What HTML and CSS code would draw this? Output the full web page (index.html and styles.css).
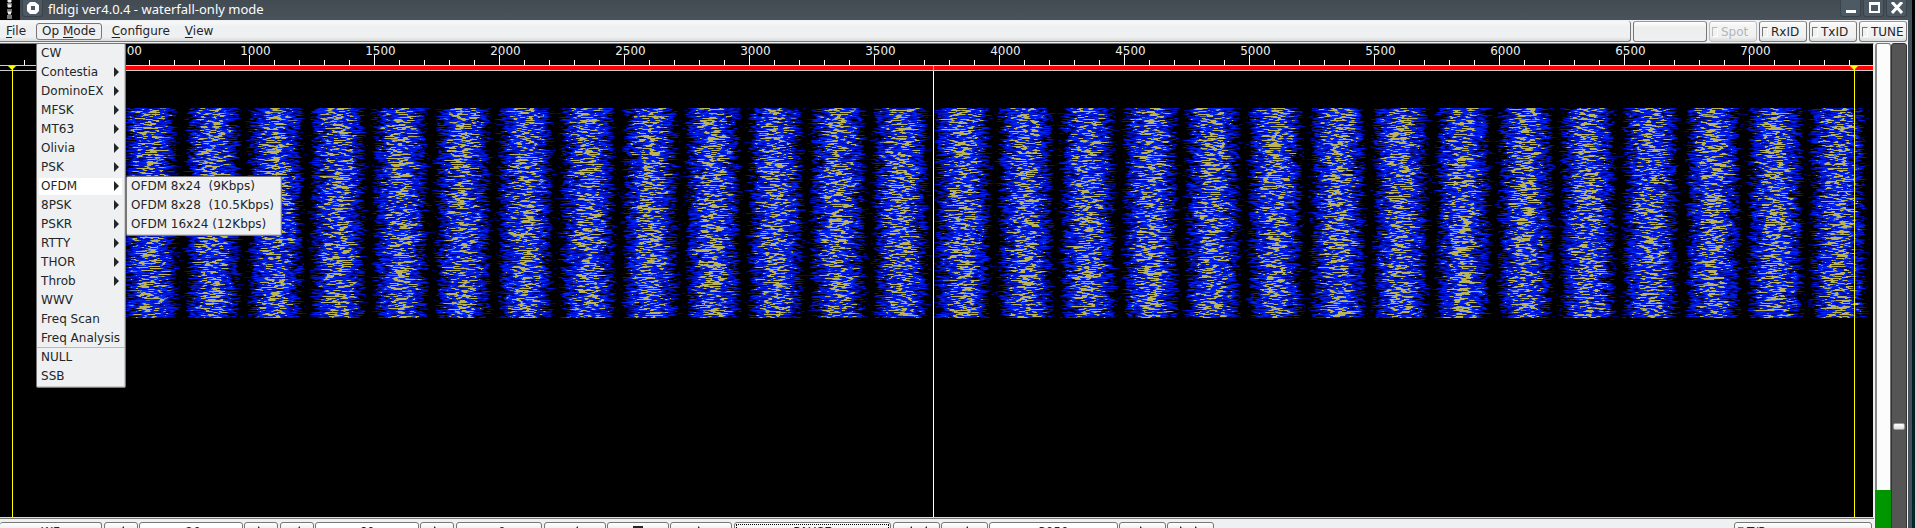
FILE: index.html
```html
<!DOCTYPE html>
<html lang="en">
<head>
<meta charset="utf-8">
<title>fldigi ver4.0.4 - waterfall-only mode</title>
<link rel="stylesheet" href="styles.css">
</head>
<body>
<div class="window">
  <header class="titlebar">
    <svg class="desktop-corner" viewBox="0 0 20 20" aria-hidden="true">
      <rect width="20" height="20" fill="#000"/>
      <path d="M7 0h5M7 5h5M7 11h5M7 17h5" stroke="#777" stroke-width="4"/>
      <path d="M8 1h3M8 6h3M8 13h3" stroke="#eee" stroke-width="3"/>
    </svg>
    <button class="title-btn" aria-label="Window menu">
      <svg width="12" height="12" viewBox="0 0 12 12"><path fill="#fff" fill-rule="evenodd" d="M3 0H8L12 3V9L9 12H3L0 9V3ZM4 4V8H8V4Z"/></svg>
    </button>
    <h1 class="title">fldigi ver4.0.4 - waterfall-only mode</h1>
    <div class="title-controls">
      <button class="title-btn" aria-label="Minimize"><svg width="12" height="12" viewBox="0 0 12 12"><path fill="#fff" d="M1 8h10v3H1z"/></svg></button>
      <button class="title-btn" aria-label="Maximize"><svg width="12" height="12" viewBox="0 0 12 12"><path fill="#fff" fill-rule="evenodd" d="M1 0h11v11H1zM3 3v6h7V3z"/></svg></button>
      <button class="title-btn" aria-label="Close"><svg width="12" height="12" viewBox="0 0 12 12"><path stroke="#fff" stroke-width="3" d="M1 0l10 11M11 0L1 11"/></svg></button>
    </div>
  </header>

  <div class="toolbar">
    <nav class="menubar">
      <button class="menu-title"><u>F</u>ile</button>
      <div class="menu-holder">
        <button class="menu-title open">Op <u>M</u>ode</button>
        <div class="menu main-menu">
          <button class="item">CW</button>
          <button class="item sub">Contestia</button>
          <button class="item sub">DominoEX</button>
          <button class="item sub">MFSK</button>
          <button class="item sub">MT63</button>
          <button class="item sub">Olivia</button>
          <button class="item sub">PSK</button>
          <div class="menu-holder">
            <button class="item sub active">OFDM</button>
            <div class="menu submenu">
              <button class="item">OFDM 8x24  (9Kbps)</button>
              <button class="item">OFDM 8x28  (10.5Kbps)</button>
              <button class="item">OFDM 16x24 (12Kbps)</button>
            </div>
          </div>
          <button class="item sub">8PSK</button>
          <button class="item sub">PSKR</button>
          <button class="item sub">RTTY</button>
          <button class="item sub">THOR</button>
          <button class="item sub">Throb</button>
          <button class="item">WWV</button>
          <button class="item">Freq Scan</button>
          <button class="item last">Freq Analysis</button>
          <button class="item">NULL</button>
          <button class="item">SSB</button>
        </div>
      </div>
      <button class="menu-title"><u>C</u>onfigure</button>
      <button class="menu-title"><u>V</u>iew</button>
    </nav>
    <div class="status"></div>
    <label class="toggle disabled"><input type="checkbox" disabled>Spot</label>
    <label class="toggle"><input type="checkbox">RxID</label>
    <label class="toggle"><input type="checkbox">TxID</label>
    <label class="toggle"><input type="checkbox">TUNE</label>
  </div>

  <main class="content">
    <section class="left">
      <div class="scope">
        <div class="scale">
          <span>500</span><span>1000</span><span>1500</span><span>2000</span><span>2500</span><span>3000</span><span>3500</span><span>4000</span><span>4500</span><span>5000</span><span>5500</span><span>6000</span><span>6500</span><span>7000</span>
        </div>
        <div class="band"></div>
        <div class="waterfall"><canvas class="signal"></canvas></div>
        <i class="marker low"></i>
        <i class="marker carrier"></i>
        <i class="marker high"></i>
      </div>
      <div class="controls">
        <button class="ctl wf">WF</button>
        <div class="group">
          <button class="ctl step" aria-label="Lower reference"><i class="arrow back"></i></button>
          <input class="ctl value" value="-20" aria-label="Reference level">
          <button class="ctl step" aria-label="Raise reference"><i class="arrow"></i></button>
        </div>
        <div class="group">
          <button class="ctl step" aria-label="Lower range"><i class="arrow back"></i></button>
          <input class="ctl value" value="60" aria-label="Signal range">
          <button class="ctl step" aria-label="Raise range"><i class="arrow"></i></button>
        </div>
        <button class="ctl zoom">x1</button>
        <div class="group">
          <button class="ctl move" aria-label="Scroll left"><i class="arrow back"></i></button>
          <button class="ctl move" aria-label="Centre"><i class="stop"></i></button>
          <button class="ctl move" aria-label="Scroll right"><i class="arrow"></i></button>
        </div>
        <button class="ctl pause">PAUSE</button>
        <div class="group">
          <button class="ctl seek" aria-label="Fast down"><i class="arrow back"></i><i class="arrow back"></i></button>
          <button class="ctl seek" aria-label="Down"><i class="arrow back"></i></button>
          <input class="ctl freq" value="3050" aria-label="Frequency">
          <button class="ctl seek" aria-label="Up"><i class="arrow"></i></button>
          <button class="ctl seek" aria-label="Fast up"><i class="arrow"></i><i class="arrow"></i></button>
        </div>
        <label class="ctl tr"><input type="checkbox">T/R</label>
      </div>
    </section>
    <div class="meter"><div class="meter-fill"></div></div>
    <div class="slider"><input class="squelch" type="range" min="0" max="100" value="23" aria-label="Squelch"></div>
  </main>
</div>
<script src="waterfall.js"></script>
</body>
</html>
```
FILE: styles.css
```css
* { box-sizing: border-box; }

body {
  margin: 0;
  padding-right: 3px;
  height: 100vh;
  overflow: hidden;
  background: linear-gradient(#000, #010c0e 30%, #00282b);
  font: 12px/18px "DejaVu Sans", sans-serif;
  color: #232629;
}

button, input { font: inherit; color: inherit; margin: 0; padding: 0; }
button { background: none; border: 0; text-align: left; }
u { text-underline-offset: 2px; }

.window {
  display: flex;
  flex-direction: column;
  height: calc(100vh + 16px);
  border-right: 4px solid #44505a;
  background: #eff0f1;
}

.titlebar {
  display: flex;
  align-items: flex-start;
  height: 20px;
  margin-right: -4px;
  padding-right: 5px;
  background: linear-gradient(#424a52, #4a535b);
}
.desktop-corner { width: 20px; height: 20px; margin-right: 2px; }
.title {
  flex: 1;
  margin: 0 0 0 5px;
  font: 13px/18px "Noto Sans", sans-serif;
  color: #fcfcfc;
}
.title-controls { display: flex; gap: 2px; }
.title-btn {
  display: flex;
  justify-content: center;
  width: 21px;
  height: 17px;
  padding-top: 2px;
  border: 1px solid #39434b;
  border-top: 0;
  border-radius: 0 0 3px 3px;
  background: #4d5963;
}

.toolbar { display: flex; gap: 2px; height: 22px; padding: 1px 1px 0 0; }
.menubar {
  display: flex;
  flex: 1;
  align-items: center;
  border-right: 1px solid #777;
  border-bottom: 1px solid #777;
  border-radius: 0 3px 3px 0;
  background: linear-gradient(#f8f8f8, #eff0f1 30%, #eff0f1 80%, #d8dad8);
}
.menu-title {
  display: block;
  height: 17px;
  padding: 0 5px;
  border: 1px solid transparent;
  border-radius: 3px;
  line-height: 15px;
}
.menu-title.open { border-color: #777; background: #eff0f1; }
.menu-holder { position: relative; }
.menubar > .menu-holder { margin: 0 4px; }
.menubar > .menu-title:last-child { margin-left: 3px; }

.menu {
  position: absolute;
  z-index: 5;
  border: 1px solid #777;
  border-radius: 2px;
  background: #eff0f1;
  box-shadow: inset -1px -1px #ccc;
}
.main-menu { top: 20px; left: 0; width: 90px; padding-bottom: 1px; }
.submenu { top: -1px; left: 89px; padding-bottom: 1px; }
.item {
  display: block;
  width: 100%;
  height: 19px;
  padding: 0 4px;
  line-height: 19px;
  white-space: pre;
}
.submenu .item { padding: 0 7px 0 4px; }
.item.sub { display: flex; justify-content: space-between; align-items: center; padding-right: 6px; }
.item.sub::after {
  content: "";
  border: 5px solid transparent;
  border-left-color: #232629;
  border-right: 0;
}
.item.active { background: linear-gradient(#fff, #fff) 2px 1px / calc(100% - 5px) 17px no-repeat; }
.item.last { border-bottom: 1px solid #bbb; }

.status {
  width: 74px;
  border: 1px solid #777;
  border-top-color: #999;
  border-radius: 3px;
  background: linear-gradient(#fff, #eee 30%, #eff0f1);
}
.toggle {
  display: flex;
  align-items: center;
  gap: 3px;
  width: 48px;
  padding-left: 2px;
  border: 1px solid #777;
  border-top-color: #999;
  border-radius: 3px;
  background: linear-gradient(#fff, #f4f4f4 20%, #eff0f1 80%, #d8dad8);
}
.toggle.disabled { color: #b4b5b6; border-color: #bbb; }
.toggle input, .tr input {
  appearance: none;
  flex: none;
  width: 6px;
  height: 10px;
  border: 1px solid #fff;
  border-top-color: #777;
  border-left-color: #777;
}
.toggle.disabled input { border-top-color: #bbb; border-left-color: #bbb; }

.content { display: flex; flex: 1; min-height: 0; padding-top: 1px; }
.left { display: flex; flex: 1; flex-direction: column; min-width: 0; }
.scope {
  position: relative;
  display: flex;
  flex: 1;
  flex-direction: column;
  border-top: 1px solid #777;
  border-right: 1px solid #eee;
  border-bottom: 1px solid #ddd;
  background: #000;
}
.scale {
  display: flex;
  height: 21px;
  padding-left: 68px;
  overflow: hidden;
  font-size: 12px;
  line-height: 14px;
  color: #eee;
  background:
    repeating-linear-gradient(90deg, transparent 0 24px, #fff 24px 25px) 0 100% / 100% 5px no-repeat,
    repeating-linear-gradient(90deg, transparent 0 124px, #fff 124px 125px) 0 100% / 100% 10px no-repeat;
}
.scale span { flex: 0 0 125px; text-align: center; }
.band {
  height: 6px;
  border: 1px solid #ccc;
  border-width: 1px 0;
  background: linear-gradient(90deg, #000 37px, #f00 37px);
}
.waterfall { flex: 1; padding-top: 37px; }
.signal { display: block; width: 100%; height: 210px; }

.marker { position: absolute; top: 22px; bottom: 0; width: 1px; background: #ff0; }
.marker::before {
  content: "";
  position: absolute;
  left: -4px;
  border: 4px solid transparent;
  border-top-color: #ff0;
  border-bottom: 0;
}
.low { left: 12px; }
.high { right: 18px; }
.carrier { left: 933px; background: linear-gradient(#cc0 5px, #fff 5px); }
.carrier::before { display: none; }

.controls {
  display: flex;
  gap: 2px;
  padding-top: 3px;
  height: 26px;
  border-top: 1px solid #777;
}
.group { display: flex; gap: 1px; }
.ctl {
  display: flex;
  align-items: center;
  justify-content: center;
  gap: 9px;
  height: 20px;
  border: 1px solid #777;
  border-radius: 3px;
  background: linear-gradient(#fff, #eff0f1 30%);
  text-align: center;
}
.wf { width: 102px; border-left: 0; }
.step { width: 34px; }
.value { width: 104px; background: #fff; }
.zoom { width: 86px; }
.move { width: 62px; }
.pause { width: 157px; outline: 1px dotted #000; outline-offset: -3px; }
.seek { width: 47px; }
.freq { width: 129px; background: #fff; }
.tr { justify-content: flex-start; gap: 3px; width: 138px; margin: 0 2px 0 auto; padding-left: 3px; }
.arrow { border: 6px solid transparent; border-left-color: #232629; border-right: 0; }
.arrow.back { border: 6px solid transparent; border-right-color: #232629; border-left: 0; }
.stop { width: 10px; height: 12px; background: #232629; }

.meter {
  display: flex;
  flex-direction: column;
  justify-content: flex-end;
  width: 16px;
  margin-left: 1px;
  border: 1px solid #777;
  border-left: 2px solid #888;
  border-radius: 3px 3px 0 0;
  background: #fcfcfc;
}
.meter-fill { height: 53px; margin: 0 -1px 0 -2px; background: #009600; }
.slider {
  display: flex;
  width: 16px;
  margin-right: 1px;
  border: 1px solid #333;
  border-radius: 3px 3px 0 0;
  background: #555;
}
.squelch {
  appearance: none;
  writing-mode: vertical-lr;
  direction: rtl;
  width: 14px;
  height: 100%;
  background: transparent;
}
.squelch::-webkit-slider-thumb {
  appearance: none;
  width: 12px;
  height: 7px;
  border: 1px solid #999;
  border-radius: 2px;
  background: linear-gradient(#fff, #ddd);
}
```
FILE: waterfall.js
```js
const canvas = document.querySelector('.signal');
const width = canvas.clientWidth;
const height = canvas.clientHeight;
canvas.width = width;
canvas.height = height;
const ctx = canvas.getContext('2d');
const image = ctx.createImageData(width, height);

let seed = 20240;
function random() {
  seed = (seed * 1664525 + 1013904223) >>> 0;
  return seed / 4294967296;
}

// Mean level of one carrier at a distance from its centre.
const curve = [[0, 0.63], [8, 0.56], [14, 0.41], [19, 0.3], [24, 0.06], [28, -0.25], [34, -0.5]];
function level(d) {
  for (let i = 1; i < curve.length; i++) {
    if (d <= curve[i][0]) {
      const [x0, y0] = curve[i - 1];
      const [x1, y1] = curve[i];
      return y0 + (y1 - y0) * (d - x0) / (x1 - x0);
    }
  }
  return -0.5;
}

function colour(v) {
  if (v < 0.05) return [0, 0, 0];
  if (v < 0.5) return [0, 28 * v * 2, Math.min(240, 60 + v * 420)];
  if (v < 0.64) return [0, 30 + (v - 0.5) * 150, 245];
  if (v < 0.71) return [95, 115, 180];
  return [186, 180, 84];
}

const first = 150;
const spacing = 62.5;
const last = first + spacing * 27;
const cell = 4;
for (let y = 0; y < height; y++) {
  const shift = random() * cell;
  const drift = (random() - 0.5) * 4;
  const noise = Array.from({ length: Math.ceil(width / cell) + 3 }, random);
  for (let x = 0; x < width; x++) {
    const p = (x + shift) / cell;
    const i = Math.floor(p);
    const n = noise[i] + (noise[i + 1] - noise[i]) * (p - i);
    const k = Math.round((x - first) / spacing);
    const centre = Math.min(last, Math.max(first, first + k * spacing));
    const v = level(Math.abs(x - centre + drift)) + (n - 0.5) * 0.95;
    const c = colour(v);
    const o = (y * width + x) * 4;
    image.data[o] = c[0];
    image.data[o + 1] = c[1];
    image.data[o + 2] = c[2];
    image.data[o + 3] = 255;
  }
}
ctx.putImageData(image, 0, 0);
```
